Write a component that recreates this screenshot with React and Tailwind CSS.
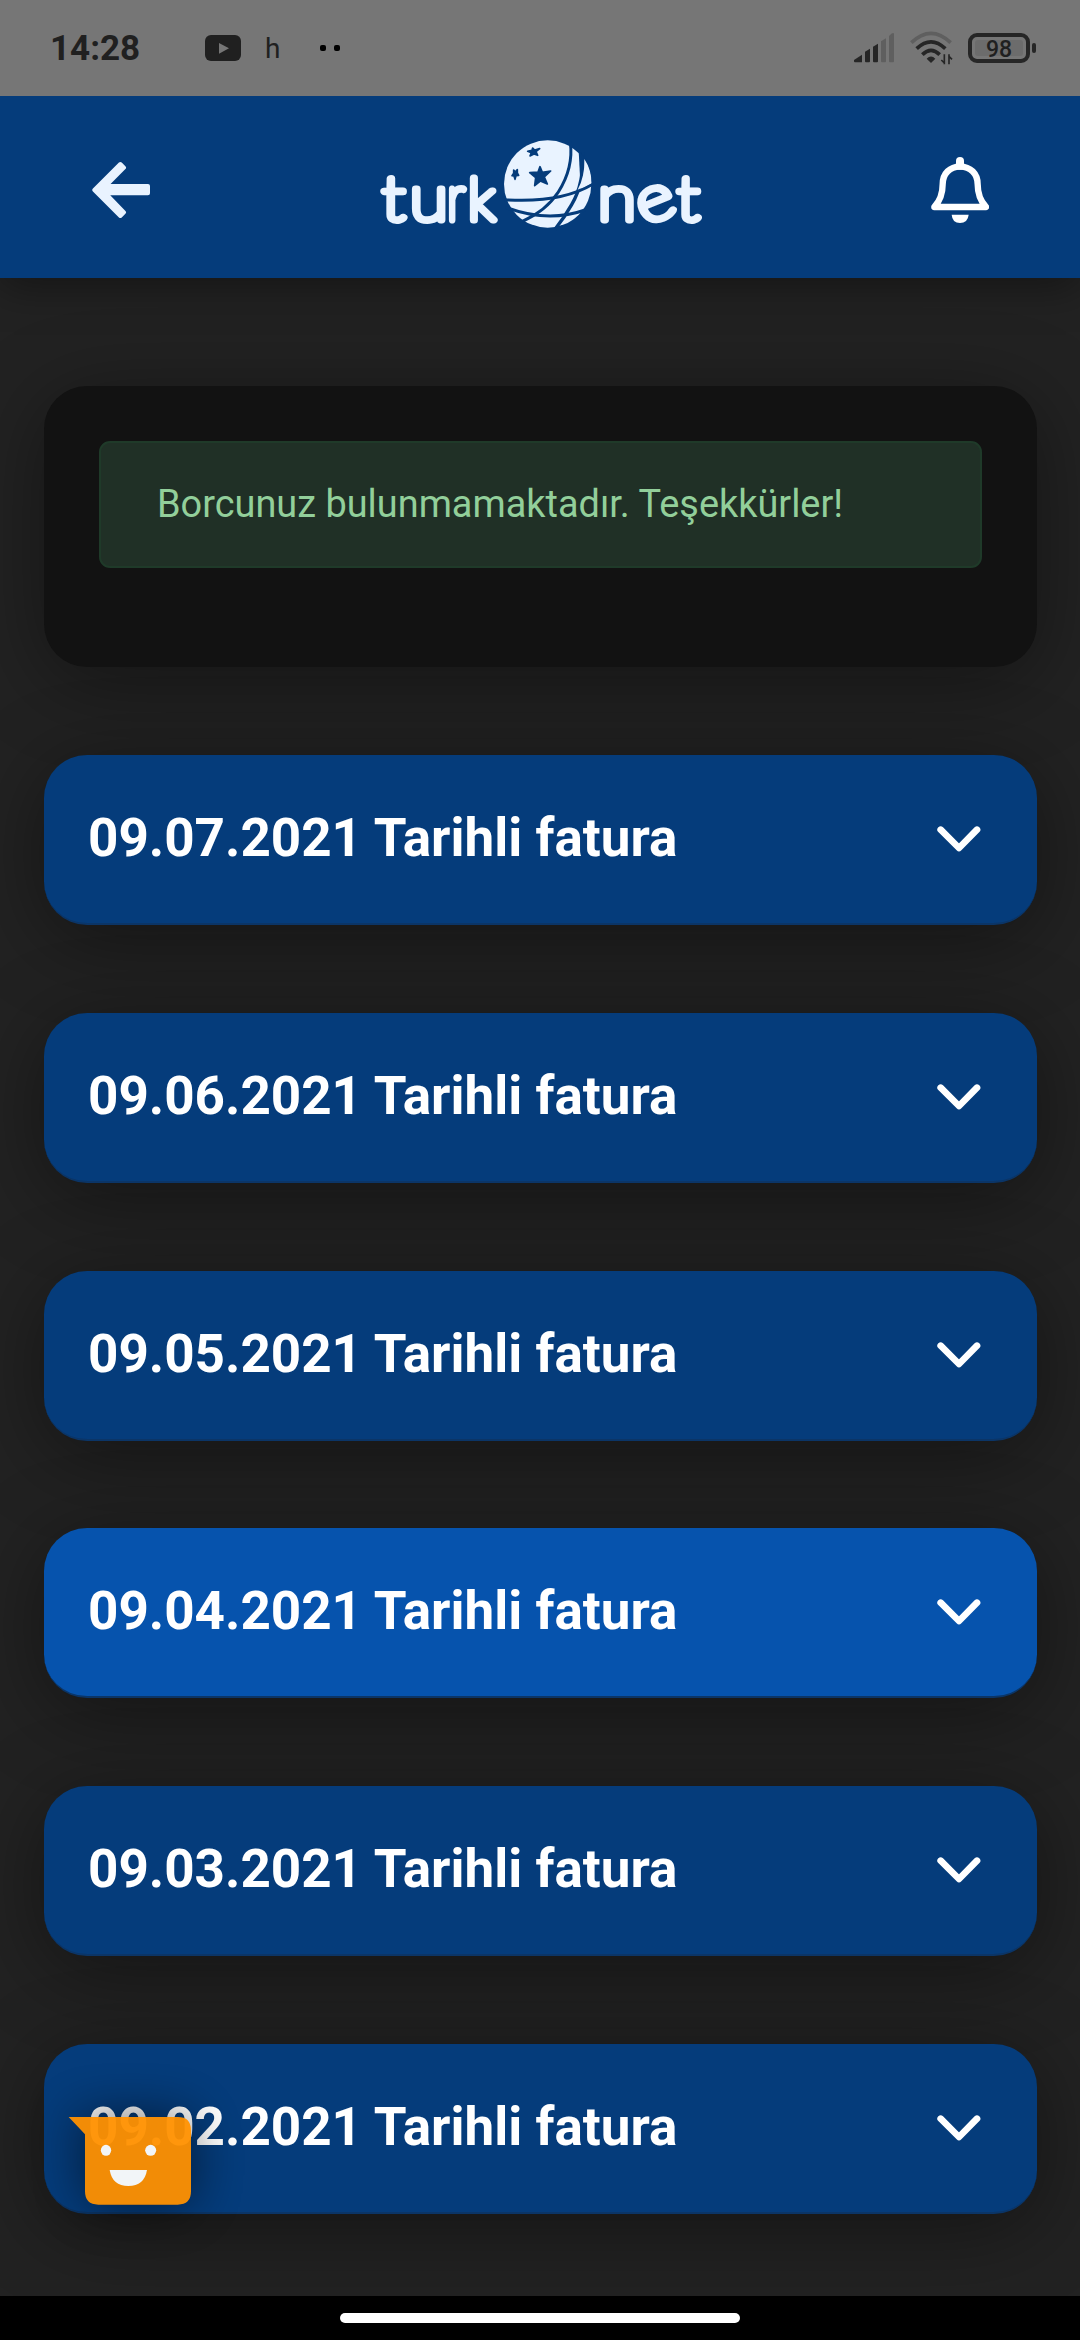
const invoices = [
  { date: "09.07.2021" },
  { date: "09.06.2021" },
  { date: "09.05.2021" },
  { date: "09.04.2021", active: true },
  { date: "09.03.2021" },
  { date: "09.02.2021" },
]

function StatusBar() {
  return (
    <div className="relative z-10 h-24 shrink-0 bg-[#767676] flex items-center pl-[50px] pr-[44px] text-[#202020]">
      <span className="text-[35px] leading-none font-bold w-[155px] pt-px">14:28</span>
      <svg className="w-9 h-[26px]" viewBox="0 0 108 78">
        <rect width="108" height="78" rx="18" fill="#202020" />
        <path d="M42 24l30 16-30 16z" fill="#767676" />
      </svg>
      <span className="text-[28px] leading-none ml-[24px] w-[55px] pt-0.5">h</span>
      <div className="flex gap-2">
        <span className="size-1.5 rounded-[2px] bg-black" />
        <span className="size-1.5 rounded-[2px] bg-black" />
      </div>

      {/* signal, wifi, battery */}
      <svg className="w-10 h-[30px] ml-auto mr-4" viewBox="99 98 120 90">
        <path d="M99 179l24-16v23h-21q-3 0-3-3z" fill="#262626" />
        <path d="M132 154l15-9v38q0 3-3 3h-9q-3 0-3-3z" fill="#262626" />
        <path d="M156 139l15-9v53q0 3-3 3h-9q-3 0-3-3z" fill="#262626" />
        <path d="M180 123l15-9v69q0 3-3 3h-9q-3 0-3-3z" fill="#5f5f5f" />
        <path d="M204 107l9-8h6v84q0 3-3 3h-9q-3 0-3-3z" fill="#5f5f5f" />
      </svg>
      <svg className="w-[43px] h-[34px] mr-[15px]" viewBox="267 97 129 102" fill="none">
        <path d="M271 132Q330 76 389 132" stroke="#5f5f5f" strokeWidth="11" />
        <path d="M287 150Q330 109 373 150" stroke="#262626" strokeWidth="11" />
        <path d="M304 168Q330 142 356 168" stroke="#262626" strokeWidth="11" />
        <path d="M317 180q13-13 26 0l-13 13z" fill="#262626" />
        <path d="M370 197V167M361 184l9 9M384 167v30M393 182l-9-9" stroke="#262626" strokeWidth="5" />
      </svg>
      <div className="w-[62px] h-[30px] border-4 border-[#262626] rounded-[9px] p-[3px]">
        <div className="h-full rounded-[3px] bg-[#6c6c6c] flex items-center justify-center text-[23px] leading-none font-medium pt-0.5">
          98
        </div>
      </div>
      <span className="w-1 h-[10px] ml-0.5 rounded-[2px] bg-[#262626]" />
    </div>
  )
}

const letters = [
  { char: "t", x: 63, scale: 1.13, size: 186 },
  { char: "u", x: 146, scale: 1.11, size: 190 },
  { char: "r", x: 258, scale: 0.83, size: 190 },
  { char: "k", x: 321, scale: 1.05, size: 172 },
  { char: "n", x: 710, scale: 1.11, size: 190 },
  { char: "e", x: 829, scale: 1.14, size: 190, rotate: -22 },
  { char: "t", x: 948, scale: 1.1, size: 186 },
]

function Logo() {
  return (
    <svg className="w-[360px] h-[130px]" viewBox="0 0 1080 390">
      <g
        fill="#e9f3ff"
        stroke="#e9f3ff"
        strokeWidth="21"
        strokeLinejoin="round"
        fontFamily="Lato, sans-serif"
        fontWeight="100"
      >
        {letters.map((l, i) => (
          <text
            key={i}
            fontSize={l.size}
            transform={`rotate(${l.rotate || 0} 884 252) translate(${l.x} 299) scale(${l.scale} 1)`}
          >
            {l.char}
          </text>
        ))}
      </g>
      <circle cx="560" cy="192" r="131" fill="#e9f3ff" />
      <g fill="none" stroke="#053c7b" strokeWidth="9">
        <path d="M628 66Q638 144 592 216Q556 272 484 304" />
        <path d="M665 96Q670 190 632 254Q612 290 582 328" strokeWidth="10" />
        <path d="M430 239Q600 250 696 192" />
        <path d="M434 262Q560 310 672 270" />
      </g>
      <path d="M653 92L675 118L664 180L657 170z" fill="#053c7b" />
      <path d="M670 117Q692 150 691 190L650 209Q672 170 670 117z" fill="#e9f3ff" />
      <g fill="#053c7b" stroke="#053c7b" strokeWidth="5" strokeLinejoin="round">
        <path d="M537 140l7 17 25-4-19 18 9 21-21-9-17 14 3-24-18-15 25-2z" />
        <path d="M515 84l6 6 15-4-11 9 5 11-11-4-12 6 4-10-11-4 13-3z" />
        <path d="M458 150l5 6 6-7 0 10 4 7-8 1-3 11-3-10-6-1 5-7z" />
      </g>
    </svg>
  )
}

function Header() {
  return (
    <header className="relative h-[182px] shrink-0 bg-[#053c7b] shadow-[0_8px_40px_rgba(0,0,0,0.4)] flex items-start justify-between pl-[92px] pr-[91px]">
      <svg className="w-[58px] h-[58px] mt-[65px]" viewBox="96 93 174 174">
        <path
          d="M103 180L181 102L192 113L137 168H264V190H137L192 247L181 258z"
          fill="#e9f3ff"
          stroke="#e9f3ff"
          strokeWidth="12"
          strokeLinejoin="round"
        />
      </svg>
      <div className="mt-6">
        <Logo />
      </div>
      <svg className="w-[58px] h-[66px] mt-[61px]" viewBox="93 81 174 198" fill="none">
        <path
          d="M103 231C120 213 128 195 128 163C128 130 150 110 180 110C211 110 233 130 233 163C233 195 241 213 258 231Z"
          stroke="#fff"
          strokeWidth="19"
          strokeLinejoin="round"
        />
        <path d="M180 93v14" stroke="#fff" strokeWidth="24" strokeLinecap="round" />
        <path d="M155 254h51q-3 25-26 25t-25-25z" fill="#fff" />
      </svg>
    </header>
  )
}

function InvoiceCard({ invoice }) {
  return (
    <div
      className={`h-[170px] shrink-0 rounded-[43px] border-b-2 border-[#0b3567] flex items-center justify-between pl-11 pr-14 shadow-[0_14px_84px_rgba(0,0,0,0.42)] ${
        invoice.active ? "bg-[#0653ad]" : "bg-[#053c7b]"
      }`}
    >
      <h2 className="text-[53px] leading-none font-bold text-white whitespace-nowrap pb-px">
        {invoice.date} Tarihli fatura
      </h2>
      <svg className="w-11 h-[26px]" viewBox="530 256 132 78" fill="none">
        <path d="M541 267L596 322L650 267" stroke="#fff" strokeWidth="20" strokeLinecap="round" strokeLinejoin="round" />
      </svg>
    </div>
  )
}

function ChatBubble() {
  return (
    <svg
      className="absolute left-[68px] top-[2116px] w-[124px] h-[90px] overflow-visible opacity-95 drop-shadow-[0_0_26px_rgba(0,0,0,0.6)]"
      viewBox="84 258 372 270"
    >
      <path d="M86 261H413Q453 261 453 301V484Q453 524 413 524H175Q135 524 135 484V313z" fill="#ff9100" />
      <ellipse cx="198" cy="361" rx="15.500" ry="16.500" fill="#fff" />
      <ellipse cx="332" cy="361" rx="16.500" ry="16.500" fill="#fff" />
      <path d="M209 420H321Q313 468 265 468T209 420z" fill="#fff" />
    </svg>
  )
}

export default function App() {
  return (
    <div className="relative w-[1080px] h-[2340px] overflow-hidden bg-[#222222] flex flex-col font-['Roboto',sans-serif]">
      <StatusBar />
      <Header />

      <main className="flex-1 min-h-0 overflow-hidden flex flex-col pl-11 pr-[43px] pt-[108px]">
        <section className="h-[281px] shrink-0 rounded-[43px] bg-[#121212] px-[55px] pt-[55px] shadow-[0_14px_84px_rgba(0,0,0,0.4)]">
          <div className="h-[127px] rounded-[11px] border-2 border-[#1f3a29] bg-[#203026] pl-14 flex items-center text-[37.900px] leading-none text-[#92cf9a] whitespace-nowrap">
            Borcunuz bulunmamaktadır. Teşekkürler!
          </div>
        </section>

        <div className="flex flex-col gap-[87.800px] mt-[88px]">
          {invoices.map((invoice) => (
            <InvoiceCard key={invoice.date} invoice={invoice} />
          ))}
        </div>
      </main>

      {/* gesture bar */}
      <div className="h-11 shrink-0 bg-black flex justify-center pt-[17px]">
        <div className="w-[400px] h-[10px] rounded-[5px] bg-white" />
      </div>

      <ChatBubble />
    </div>
  )
}
